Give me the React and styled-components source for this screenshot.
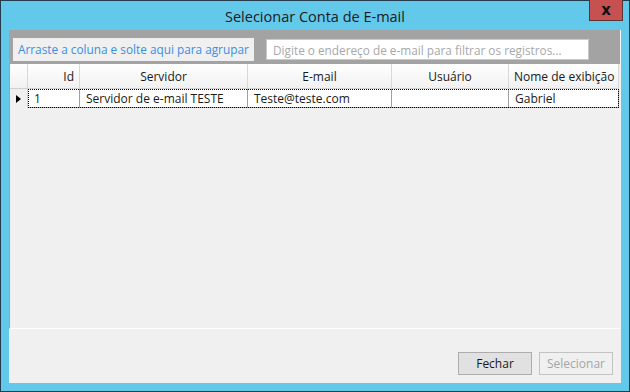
import styled, { createGlobalStyle } from "styled-components";

const GlobalStyle = createGlobalStyle`
  html, body {
    margin: 0;
    padding: 0;
    background: #1f2f6b;
  }
  body {
    font-family: "Open Sans", "Noto Sans", sans-serif;
  }
`;

const columns = [
  { key: "id", label: "Id", width: 52, align: "right" },
  { key: "server", label: "Servidor", width: 168, align: "center" },
  { key: "email", label: "E-mail", width: 144, align: "center" },
  { key: "user", label: "Usuário", width: 117, align: "center" },
  { key: "name", label: "Nome de exibição", width: 110, align: "center" },
];

const rows = [
  { id: "1", server: "Servidor de e-mail TESTE", email: "Teste@teste.com", user: "", name: "Gabriel" },
];

const template = `18px ${columns.map((c) => c.width + "px").join(" ")}`;

const App = () => {
  return (
    <>
      <GlobalStyle />
      <Window>
        <TitleBar>
          <Title>Selecionar Conta de E-mail</Title>
          <CloseButton type="button" aria-label="Fechar">x</CloseButton>
        </TitleBar>
        <Client>
          <Toolbar>
            <GroupPanel>Arraste a coluna e solte aqui para agrupar</GroupPanel>
            <Search placeholder="Digite o endereço de e-mail para filtrar os registros..." />
          </Toolbar>
          <Grid>
            <HeaderRow>
              <HeaderCell />
              {columns.map((c) => (
                <HeaderCell key={c.key} $align={c.align}>{c.label}</HeaderCell>
              ))}
            </HeaderRow>
            {rows.map((r) => (
              <DataRow key={r.id}>
                <RowHeader>
                  <Arrow />
                </RowHeader>
                <FocusRow>
                  {columns.map((c) => (
                    <Cell key={c.key} $w={c.width}>{r[c.key]}</Cell>
                  ))}
                </FocusRow>
              </DataRow>
            ))}
          </Grid>
          <Footer>
            <Button type="button">Fechar</Button>
            <Button type="button" disabled>Selecionar</Button>
          </Footer>
        </Client>
      </Window>
    </>
  );
};

const Window = styled.div`
  width: 630px;
  height: 392px;
  box-sizing: border-box;
  background: #63c9ea;
  border: 1px solid #233c4d;
  padding: 0 8px 8px 8px;
  display: flex;
  flex-direction: column;
`;

const TitleBar = styled.div`
  position: relative;
  height: 29px;
  margin: 0 -8px;
  display: flex;
  align-items: center;
  justify-content: center;
`;

const Title = styled.div`
  font-size: 14.5px;
  color: #1a1a1a;
  padding-top: 2px;
`;

const CloseButton = styled.button`
  position: absolute;
  top: -1px;
  right: 6px;
  width: 34px;
  height: 21px;
  background: #c75050;
  border: 1px solid #5a3434;
  border-top: none;
  color: #111;
  font-family: "DejaVu Sans", sans-serif;
  font-weight: bold;
  font-size: 15px;
  line-height: 18px;
  padding: 0;
`;

const Client = styled.div`
  flex: 1;
  background: #f0f0f0;
  display: flex;
  flex-direction: column;
`;

const Toolbar = styled.div`
  height: 34px;
  background: #a3a3a3;
  display: flex;
  align-items: flex-start;
  padding: 8px 0 0 4px;
  box-sizing: border-box;
  border-right: 1px solid #f4f4f4;
`;

const GroupPanel = styled.div`
  width: 241px;
  height: 23px;
  background: #f0f0f0;
  color: #3b8ee2;
  font-size: 11.8px;
  line-height: 23px;
  padding-left: 5px;
  box-sizing: border-box;
  white-space: nowrap;
`;

const Search = styled.input`
  margin: 1px 0 0 12px;
  width: 323px;
  height: 21px;
  box-sizing: border-box;
  border: 1px solid #c9c9c9;
  background: #fff;
  font-family: "Open Sans", "Noto Sans", sans-serif;
  font-size: 11.8px;
  padding: 0 0 0 6px;
  outline: none;
  &::placeholder {
    color: #a8a8a8;
  }
`;

const Grid = styled.div`
  flex: 1;
  background: #f0f0f0;
  border-left: 1px solid #a3a3a3;
  border-right: 1px solid #f4f4f4;
  border-bottom: 1px solid #ffffff;
`;

const HeaderRow = styled.div`
  display: grid;
  grid-template-columns: ${template};
  height: 25px;
`;

const HeaderCell = styled.div`
  background: linear-gradient(#ffffff, #f1f1f1);
  border-right: 1px solid #d8d8d8;
  border-bottom: 1px solid #d0d0d0;
  font-size: 12px;
  color: #1a1a1a;
  line-height: 26px;
  text-align: ${(p) => p.$align || "left"};
  padding: 0 5px;
  box-sizing: border-box;
  white-space: nowrap;
  overflow: hidden;
`;

const DataRow = styled.div`
  display: flex;
  height: 19px;
`;

const RowHeader = styled.div`
  width: 18px;
  background: #f0f0f0;
  border-right: 1px solid #d0d0d0;
  box-sizing: border-box;
  display: flex;
  align-items: center;
  padding-left: 6px;
`;

const Arrow = styled.span`
  width: 0;
  height: 0;
  border-top: 4px solid transparent;
  border-bottom: 4px solid transparent;
  border-left: 5px solid #000;
`;

const FocusRow = styled.div`
  display: flex;
  outline: 1px dotted #000;
  outline-offset: -1px;
  background: #fff;
`;

const Cell = styled.div`
  width: ${(p) => p.$w}px;
  box-sizing: border-box;
  border-right: 1px solid #a0a0a0;
  border-bottom: 1px solid #a0a0a0;
  font-size: 12px;
  color: #1a1a1a;
  line-height: 19px;
  padding: 0 6px;
  white-space: nowrap;
  overflow: hidden;
`;

const Footer = styled.div`
  height: 54px;
  display: flex;
  justify-content: flex-end;
  align-items: flex-start;
  gap: 7px;
  padding: 23px 8px 0 0;
  box-sizing: border-box;
`;

const Button = styled.button`
  width: 74px;
  height: 23px;
  background: #e1e1e1;
  border: 1px solid #adadad;
  font-family: "Open Sans", "Noto Sans", sans-serif;
  font-size: 12px;
  color: #1a1a1a;
  padding: 0;
  &:disabled {
    background: #f0f0f0;
    border-color: #c3c3c3;
    color: #a5a5a5;
  }
`;

export default App;
